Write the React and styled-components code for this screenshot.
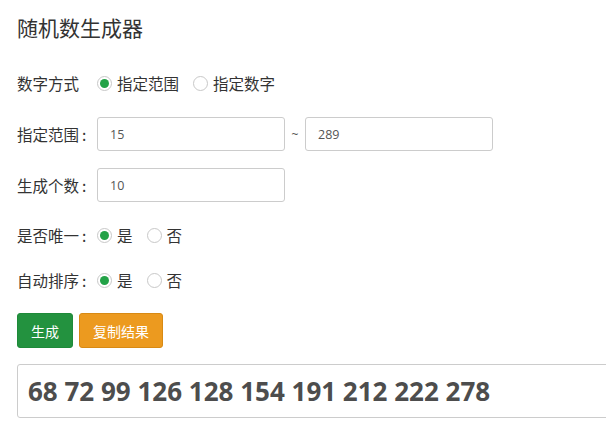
import React from "react";
import styled, { createGlobalStyle } from "styled-components";

const Global = createGlobalStyle`
  body {
    margin: 0;
    background: #fff;
    font-family: "Open Sans", "Noto Sans CJK SC", sans-serif;
    color: #333;
  }
`;

const Page = styled.div`
  padding: 13px 0 0 17px;
  overflow: hidden;
  width: 606px;
  box-sizing: border-box;
`;

const Title = styled.h1`
  margin: 0;
  font-family: "Noto Sans CJK SC", sans-serif;
  font-size: 21px;
  font-weight: 400;
  line-height: 28px;
  color: #333;
`;

const Row = styled.div`
  display: flex;
  align-items: center;
  height: ${(p) => p.$h || 34}px;
  margin-top: ${(p) => p.$mt}px;
`;

const Label = styled.span`
  width: 80px;
  flex-shrink: 0;
  font-family: "Noto Sans CJK SC", sans-serif;
  font-size: 15.5px;
  color: #333;
`;

const Colon = styled.span`
  margin-left: 3px;
`;

const Option = styled.label`
  display: flex;
  align-items: center;
  margin-right: 14px;
  font-family: "Noto Sans CJK SC", sans-serif;
  font-size: 15.5px;
  color: #333;
`;

const Dot = styled.span`
  width: 15px;
  height: 15px;
  border-radius: 50%;
  border: 1px solid #c8c8c8;
  box-sizing: border-box;
  margin-right: 5px;
  display: flex;
  align-items: center;
  justify-content: center;
  background: #fff;

  &::after {
    content: "";
    width: 9px;
    height: 9px;
    border-radius: 50%;
    background: ${(p) => (p.$on ? "#23a247" : "transparent")};
  }
`;

const Input = styled.div`
  width: 188px;
  height: 34px;
  box-sizing: border-box;
  border: 1px solid #ccc;
  border-radius: 3px;
  padding: 0 12px;
  display: flex;
  align-items: center;
  font-family: "Open Sans", sans-serif;
  font-size: 12.5px;
  color: #555;
`;

const Tilde = styled.span`
  width: 20px;
  text-align: center;
  font-size: 12px;
  color: #555;
`;

const Button = styled.button`
  height: 35px;
  padding: 0 13px;
  margin-right: 6px;
  border: 1px solid ${(p) => p.$border};
  border-radius: 3px;
  background: ${(p) => p.$bg};
  color: #fff;
  font-family: "Noto Sans CJK SC", sans-serif;
  font-size: 14px;
`;

const Result = styled.div`
  margin-top: 16px;
  height: 54px;
  width: 620px;
  box-sizing: border-box;
  border: 1px solid #ccc;
  border-radius: 3px;
  padding-left: 10px;
  display: flex;
  align-items: center;
  font-family: "Open Sans", sans-serif;
  font-weight: 700;
  font-size: 26px;
  color: #4d4d4d;
`;

const Radio = ({ on, children }) => (
  <Option>
    <Dot $on={on} />
    {children}
  </Option>
);

const FieldLabel = ({ children }) => (
  <Label>
    {children}
    <Colon>:</Colon>
  </Label>
);

export default function App() {
  return (
    <>
      <Global />
      <Page>
        <Title>随机数生成器</Title>
        <Row $mt={25}>
          <Label>数字方式</Label>
          <Radio on>指定范围</Radio>
          <Radio>指定数字</Radio>
        </Row>
        <Row $mt={17}>
          <FieldLabel>指定范围</FieldLabel>
          <Input>15</Input>
          <Tilde>~</Tilde>
          <Input>289</Input>
        </Row>
        <Row $mt={17}>
          <FieldLabel>生成个数</FieldLabel>
          <Input>10</Input>
        </Row>
        <Row $mt={16}>
          <FieldLabel>是否唯一</FieldLabel>
          <Radio on>是</Radio>
          <Radio>否</Radio>
        </Row>
        <Row $mt={11}>
          <FieldLabel>自动排序</FieldLabel>
          <Radio on>是</Radio>
          <Radio>否</Radio>
        </Row>
        <Row $mt={16} $h={35}>
          <Button $bg="#23923f" $border="#1e8a39">生成</Button>
          <Button $bg="#ec9a1f" $border="#d88a14">复制结果</Button>
        </Row>
        <Result>68 72 99 126 128 154 191 212 222 278</Result>
      </Page>
    </>
  );
}
